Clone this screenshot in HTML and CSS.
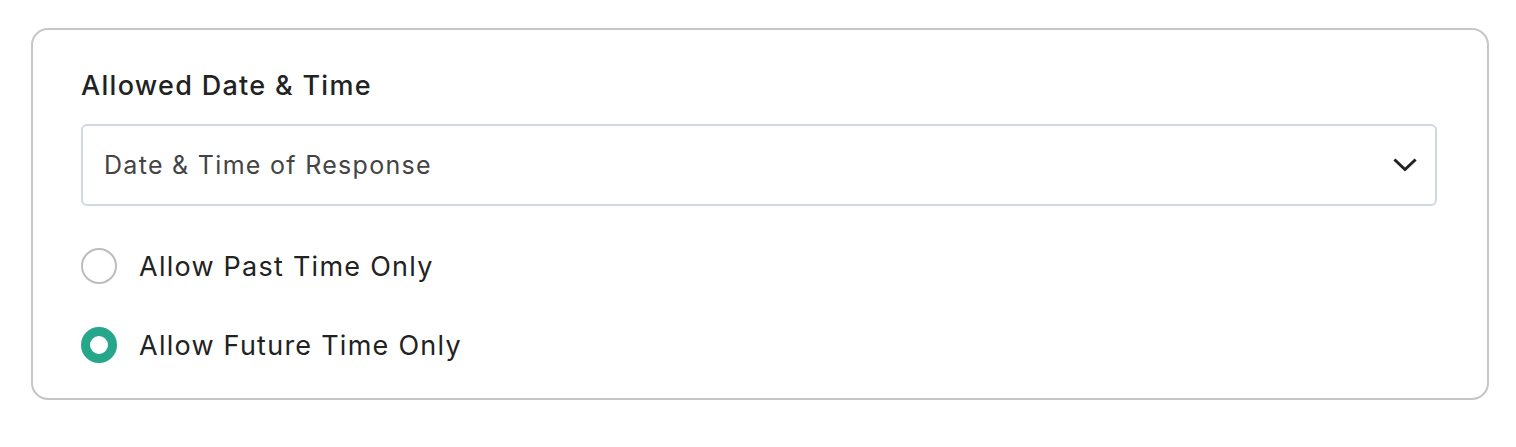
FILE: index.html
```html
<!DOCTYPE html>
<html>
<head>
<meta charset="utf-8">
<link rel="stylesheet" href="styles.css">
</head>
<body>
<div class="card">
  <div class="title">Allowed Date &amp; Time</div>
  <div class="select">
    <span class="select-text">Date &amp; Time of Response</span>
    <svg class="chevron" width="24" height="16" viewBox="0 0 24 16"><path d="M2.5 3.5 L12 12.5 L21.5 3.5" fill="none" stroke="#222" stroke-width="3" stroke-linecap="square"/></svg>
  </div>
  <div class="options">
    <label class="option"><span class="radio"></span><span class="label">Allow Past Time Only</span></label>
    <label class="option"><span class="radio checked"></span><span class="label">Allow Future Time Only</span></label>
  </div>
</div>
</body>
</html>
```
FILE: styles.css
```css
html, body { margin: 0; padding: 0; background: #ffffff; }
body { font-family: Inter, "Noto Sans", sans-serif; color: #222; }
.card {
  margin: 28px 0 0 31px;
  width: 1458px;
  height: 372px;
  box-sizing: border-box;
  border: 2px solid #c6c6c6;
  border-radius: 17px;
  padding: 40px 50px 0 48px;
}
.title {
  font-size: 27px;
  font-weight: 500;
  line-height: 32px;
  color: #222;
  letter-spacing: 1.3px;
}
.select {
  margin-top: 22px;
  height: 82px;
  box-sizing: border-box;
  border: 2px solid #cfd9e4;
  border-radius: 6px;
  display: flex;
  align-items: center;
  justify-content: space-between;
  padding: 0 18px 0 21px;
}
.select-text { font-size: 25px; color: #444; letter-spacing: 1.3px; }
.chevron { display: block; }
.options { margin-top: 42px; display: flex; flex-direction: column; gap: 43px; }
.option { display: flex; align-items: center; gap: 22px; height: 36px; }
.radio {
  width: 36px; height: 36px; box-sizing: border-box;
  border: 2px solid #bdbdbd; border-radius: 50%;
  flex: none;
}
.radio.checked { border: 9.5px solid #26a68a; }
.label { font-size: 27px; color: #222; letter-spacing: 1.25px; }
```
